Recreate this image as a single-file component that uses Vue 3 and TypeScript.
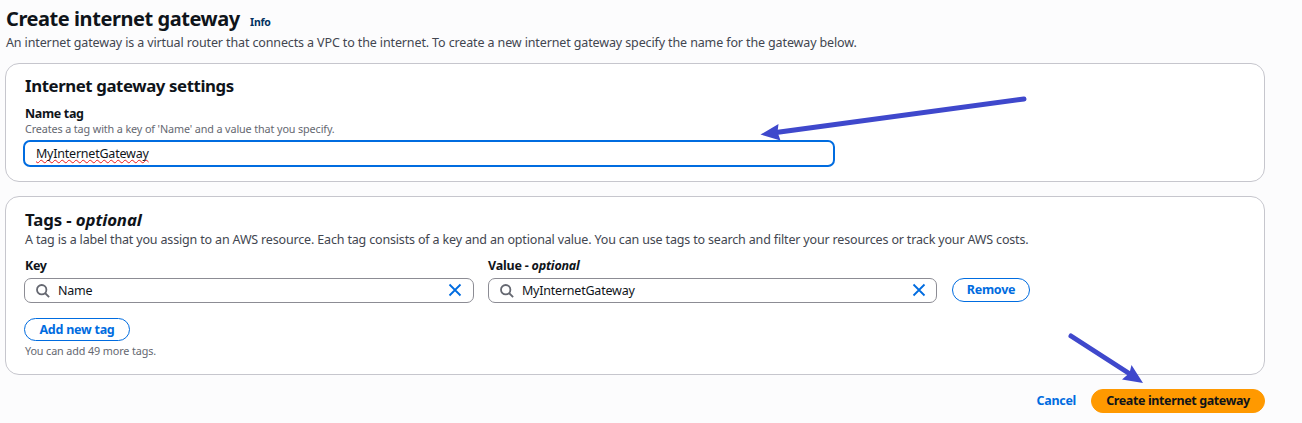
<script setup lang="ts">
import { ref } from 'vue'

interface TagField {
  id: string
  label: string
  optional: boolean
  value: string
}

const gatewayName = ref('MyInternetGateway')
const fields = ref<TagField[]>([
  { id: 'key', label: 'Key', optional: false, value: 'Name' },
  { id: 'value', label: 'Value', optional: true, value: 'MyInternetGateway' },
])
</script>

<template>
  <main class="page">
    <header class="page-header">
      <h1>Create internet gateway</h1>
      <a class="info">Info</a>
    </header>
    <p class="lead">An internet gateway is a virtual router that connects a VPC to the internet. To create a new internet gateway specify the name for the gateway below.</p>

    <section class="card settings">
      <h2>Internet gateway settings</h2>
      <div class="label">Name tag</div>
      <div class="hint">Creates a tag with a key of 'Name' and a value that you specify.</div>
      <div class="name-input"><span class="typed misspelled">{{ gatewayName }}</span></div>
    </section>

    <section class="card tags">
      <h2>Tags - <em>optional</em></h2>
      <p class="sub">A tag is a label that you assign to an AWS resource. Each tag consists of a key and an optional value. You can use tags to search and filter your resources or track your AWS costs.</p>
      <div class="row">
        <div v-for="field in fields" :key="field.id" class="field">
          <div class="label">
            <span>{{ field.label }}<template v-if="field.optional"> - <em>optional</em></template></span>
          </div>
          <div class="search">
            <svg class="glass" viewBox="0 0 14 14" width="14" height="14">
              <circle cx="5.7" cy="5.7" r="4.700" />
              <path d="M9 9l4.100 4.100" />
            </svg>
            <span class="typed">{{ field.value }}</span>
            <svg class="clear" viewBox="0 0 14 14" width="14" height="14">
              <path d="M1.500 1.500l11 11M12.500 1.500l-11 11" />
            </svg>
          </div>
        </div>
        <button class="btn remove">Remove</button>
      </div>
      <button class="btn add">Add new tag</button>
      <div class="hint more">You can add 49 more tags.</div>
    </section>

    <footer class="actions">
      <a class="cancel">Cancel</a>
      <button class="btn primary">Create internet gateway</button>
    </footer>

    <svg class="arrows" viewBox="0 0 1302 423" width="1302" height="423">
      <path class="shaft" d="M1024 99L776 132.500" />
      <path class="head" d="M760.500 134.500L778.500 124L777.500 132L780.500 140.500Z" />
      <path class="shaft" d="M1071 336L1130 374" />
      <path class="head" d="M1143 383L1131.500 365L1129.500 373L1122 379.500Z" />
    </svg>
  </main>
</template>

<style>
body {
  margin: 0;
  background: #fcfcfd;
}
</style>

<style scoped>
.page {
  position: relative;
  box-sizing: border-box;
  width: 1302px;
  height: 423px;
  padding: 6px 37px 0 5px;
  overflow: hidden;
  background: #fcfcfd;
  color: #0f141a;
  font-family: "Noto Sans", "Open Sans", sans-serif;
  font-size: 12.5px;
  white-space: nowrap;
}
h1, h2, p { margin: 0; }
.page-header {
  display: flex;
  height: 26px;
  padding-left: 1px;
}
h1 {
  width: 244px;
  font-size: 20px;
  line-height: 26px;
  font-weight: 700;
  letter-spacing: -0.44px;
}
.info {
  color: #033160;
  font-size: 10.5px;
  font-weight: 700;
  line-height: 32px;
  letter-spacing: -0.2px;
}
.lead {
  height: 31px;
  padding-left: 1px;
  color: #424650;
  line-height: 21px;
  letter-spacing: -0.125px;
}
.card {
  box-sizing: border-box;
  border: 1px solid #c6c6cd;
  border-radius: 14px;
  background: #fff;
}
.settings {
  height: 119px;
  margin-bottom: 14px;
  padding: 10px 18px 0;
}
.tags {
  height: 179px;
  padding: 11px 18px 0;
}
h2 {
  height: 24px;
  padding-left: 1px;
  font-size: 16.8px;
  line-height: 24px;
  font-weight: 700;
  letter-spacing: -0.4px;
}
.tags h2 { letter-spacing: -0.1px; }
.label {
  font-size: 12.5px;
  font-weight: 700;
  letter-spacing: -0.35px;
}
.settings .label {
  padding: 7px 0 0 1px;
  line-height: 18px;
}
.hint {
  padding-left: 1px;
  color: #656871;
  font-size: 10.8px;
  line-height: 12px;
  letter-spacing: -0.12px;
}
.name-input {
  box-sizing: border-box;
  width: 812px;
  height: 27px;
  margin: 5px 0 0 -1px;
  padding-left: 11px;
  border: 2px solid #006ce0;
  border-radius: 7px;
  line-height: 23px;
}
.typed { letter-spacing: -0.22px; }
.misspelled {
  text-decoration: underline wavy #f01818 1px;
  text-decoration-skip-ink: none;
  text-underline-offset: 1px;
}
.sub {
  height: 26px;
  padding-left: 1px;
  color: #424650;
  line-height: 16px;
  letter-spacing: -0.165px;
}
.row {
  display: flex;
  align-items: flex-end;
  gap: 14px;
}
.field { width: 450px; }
.field + .field { width: 449px; }
.field .label {
  height: 20px;
  padding-left: 1px;
  line-height: 16px;
}
.field + .field .label {
  padding-left: 0;
  letter-spacing: -0.2px;
}
.search {
  display: flex;
  align-items: center;
  box-sizing: border-box;
  height: 25px;
  padding: 0 11px;
  border: 1px solid #8c8c94;
  border-radius: 7px;
}
.field + .field .search { padding-right: 10px; }
.glass {
  margin-right: 8px;
  fill: none;
  stroke: #656871;
  stroke-width: 1.8;
}
.clear {
  margin: 0 0 1px auto;
  fill: none;
  stroke: #006ce0;
  stroke-width: 1.8;
}
.btn {
  box-sizing: border-box;
  display: block;
  height: 24px;
  padding: 0;
  border: 1.500px solid #006ce0;
  border-radius: 12px;
  background: #fff;
  color: #006ce0;
  font: 700 12.5px/20px "Noto Sans", "Open Sans", sans-serif;
  letter-spacing: -0.25px;
}
.remove {
  width: 78px;
  margin: 0 0 1px 1px;
}
.add {
  width: 106px;
  height: 23px;
  margin-top: 15px;
  line-height: 19px;
}
.more { padding-top: 4px; }
.actions {
  display: flex;
  justify-content: flex-end;
  align-items: center;
  gap: 15px;
  height: 24px;
  margin-top: 14px;
}
.cancel {
  margin-bottom: 1px;
  color: #006ce0;
  font-weight: 700;
  letter-spacing: -0.3px;
}
.primary {
  width: 174px;
  border-color: #ff9900;
  background: #ff9900;
  color: #0f141a;
  letter-spacing: -0.38px;
}
/* Pointer annotations drawn over the form */
.arrows {
  position: absolute;
  top: 0;
  left: 0;
  pointer-events: none;
}
.shaft {
  stroke: #3f48cc;
  stroke-width: 5;
  stroke-linecap: round;
}
.head { fill: #3f48cc; }
</style>
